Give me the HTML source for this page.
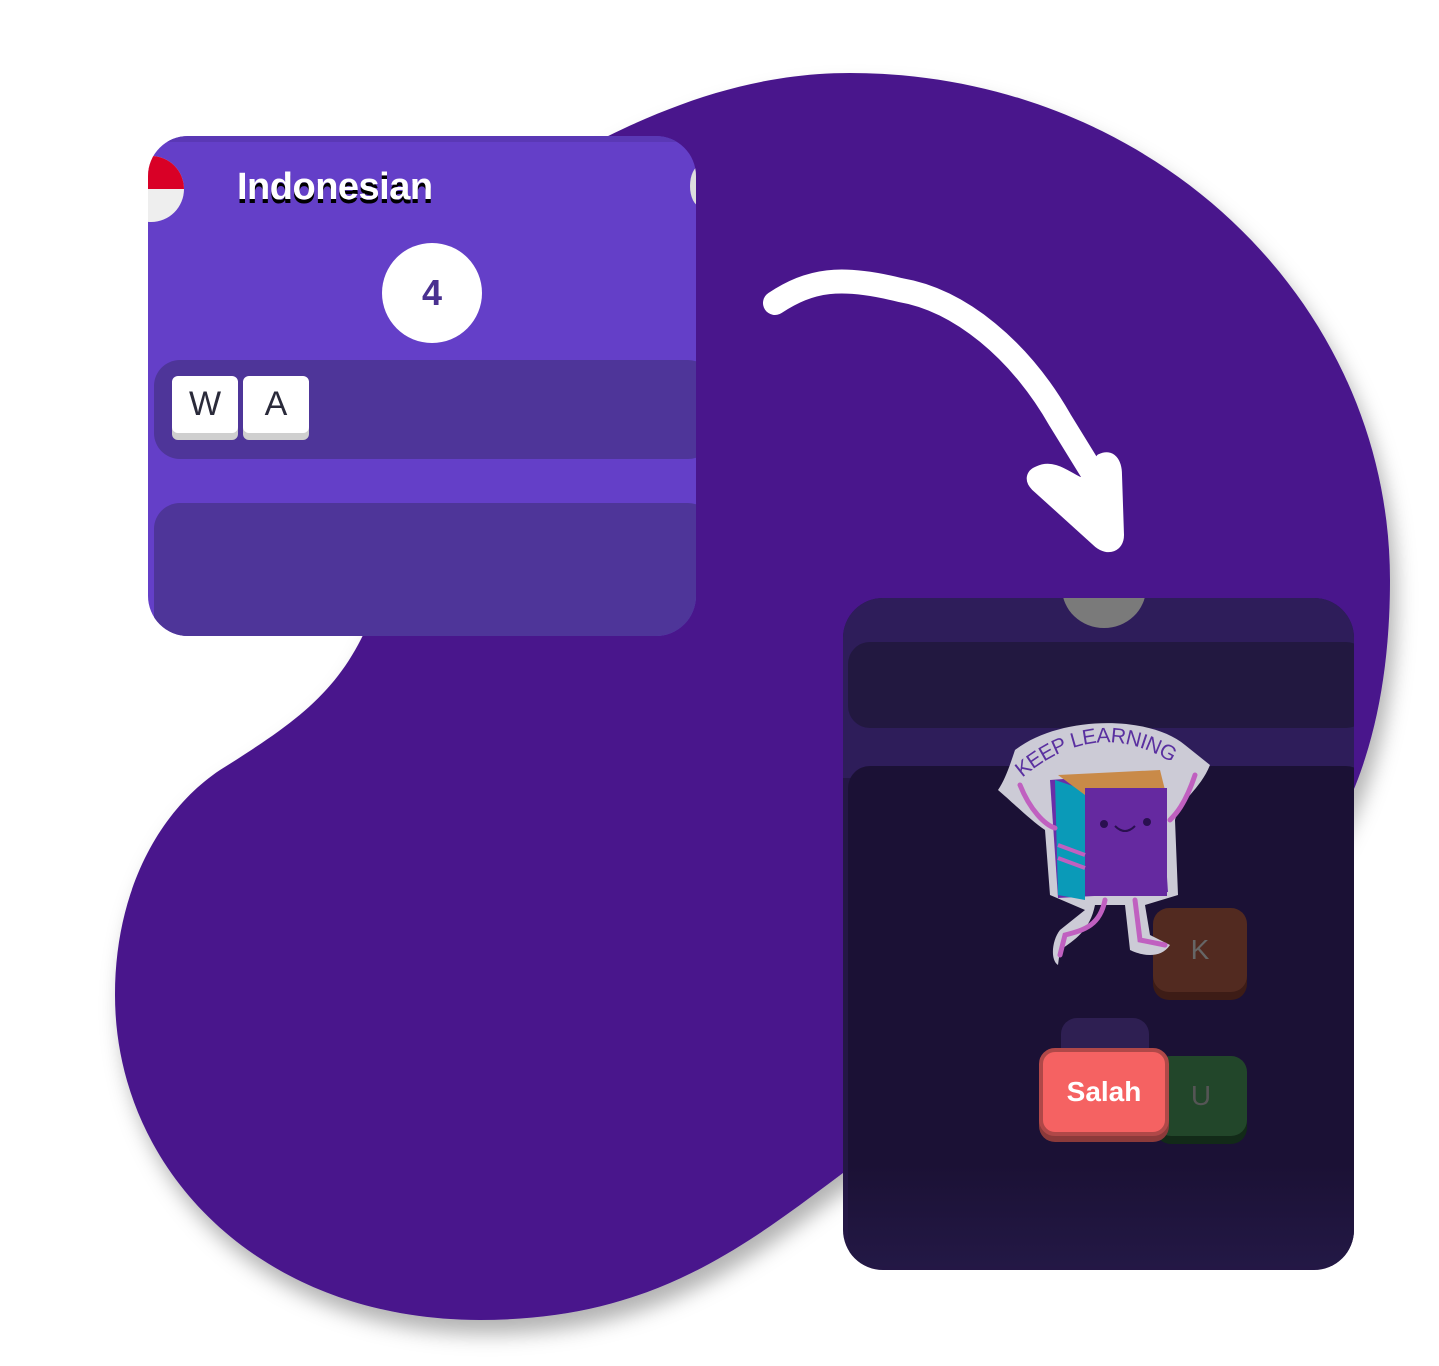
<!DOCTYPE html>
<html><head><meta charset="utf-8">
<style>
html,body{margin:0;padding:0;background:#fff;}
body{width:1439px;height:1366px;position:relative;overflow:hidden;font-family:"Liberation Sans",sans-serif;}
.abs{position:absolute;}
.key{position:absolute;background:#fff;border-radius:6px;box-shadow:0 7px 0 #cfcfcf;color:#2a2a3a;font-size:34px;text-align:center;}
</style></head><body>
<svg class="abs" style="left:0;top:0" width="1439" height="1366">
<defs><filter id="sh" x="-10%" y="-10%" width="130%" height="130%"><feDropShadow dx="6" dy="14" stdDeviation="10" flood-color="#000" flood-opacity="0.3"/></filter></defs>
<path filter="url(#sh)" fill="#48178c" d="M850 73 C1150 73 1390 300 1390 580 C1390 800 1300 950 1100 1000 C1000 1060 920 1120 843 1173 C740 1250 650 1320 480 1320 C260 1320 115 1170 115 995 C115 890 160 810 220 770 C300 720 340 690 370 620 L600 140 C680 100 760 73 850 73 Z"/>
<path d="M775 303 C810 280 840 275 900 290 C960 300 1020 350 1060 420 L1100 485" stroke="#fff" stroke-width="24" fill="none" stroke-linecap="round"/>
<path d="M1038 470 C1055 462 1070 478 1082 482 L1100 458 C1112 452 1118 462 1118 475 L1120 535 C1120 548 1108 552 1098 544 L1035 487 C1028 480 1030 473 1038 470 Z" fill="#fff" stroke="#fff" stroke-width="8" stroke-linejoin="round"/>
</svg>

<!-- left card -->
<div class="abs" style="left:148px;top:136px;width:548px;height:500px;border-radius:40px;background:#643fc8;overflow:hidden;">
  <div class="abs" style="left:0;top:0;width:548px;height:6px;background:#5a38b5"></div>
  <div class="abs" style="left:-30px;top:20px;width:66px;height:66px;border-radius:50%;overflow:hidden;background:#eee;">
    <div style="height:33px;background:#d90026"></div></div>
  <div class="abs" style="left:542px;top:30px;width:20px;height:40px;border-radius:50%;background:#ddd"></div>
  <div class="abs" style="left:89px;top:30px;color:#fff;font-size:38px;font-weight:bold;text-shadow:0 4px 0 #000;letter-spacing:-0.5px">Indonesian</div>
  <div class="abs" style="left:234px;top:107px;width:100px;height:100px;border-radius:50%;background:#fff;color:#4a3090;font-size:36px;font-weight:bold;text-align:center;line-height:100px">4</div>
  <div class="abs" style="left:6px;top:224px;width:560px;height:99px;border-radius:26px;background:#4e3599"></div>
  <div class="key" style="left:24px;top:240px;width:66px;height:57px;line-height:57px">W</div>
  <div class="key" style="left:95px;top:240px;width:66px;height:57px;line-height:57px">A</div>
  <div class="abs" style="left:6px;top:367px;width:560px;height:140px;border-radius:26px;background:#4e3599"></div>
</div>

<!-- right card -->
<div class="abs" style="left:843px;top:598px;width:511px;height:672px;border-radius:40px;background:#241745;overflow:hidden;">
  <div class="abs" style="left:0;top:0;width:511px;height:180px;background:#2e1d5a"></div>
  <div class="abs" style="left:219px;top:-50px;width:84px;height:80px;border-radius:50%;background:#7a7a7a"></div>
  <div class="abs" style="left:5px;top:44px;width:520px;height:86px;border-radius:22px;background:#221840"></div>
  <div class="abs" style="left:5px;top:168px;width:520px;height:500px;border-radius:22px;background:linear-gradient(#1b1135 80%,#231845)"></div>
  <div class="abs" style="left:310px;top:310px;width:94px;height:84px;border-radius:16px;background:#522a20;box-shadow:0 8px 0 #3d1c16;color:#666;font-size:28px;text-align:center;line-height:84px">K</div>
  <div class="abs" style="left:218px;top:420px;width:88px;height:60px;border-radius:16px;background:#2e1f52"></div>
  <div class="abs" style="left:312px;top:458px;width:92px;height:80px;border-radius:16px;background:#22462a;box-shadow:0 8px 0 #122a18;color:#555;font-size:28px;text-align:center;line-height:80px">U</div>
  <div class="abs" style="left:196px;top:450px;width:122px;height:80px;border-radius:16px;background:#f56262;border:4px solid #b04848;box-shadow:0 6px 0 #8c3a3a;color:#fff;font-size:28px;font-weight:bold;text-align:center;line-height:80px">Salah</div>
</div>

<!-- sticker -->
<svg class="abs" style="left:995px;top:720px" width="225" height="250" viewBox="995 720 225 250">
  <path d="M1015 750 C1060 715 1150 715 1185 745 L1210 765 C1200 790 1180 800 1175 820 L1178 895 L1145 905 L1150 935 L1170 945 C1160 960 1140 955 1130 950 L1125 905 L1095 905 C1090 930 1075 940 1060 950 L1058 965 C1050 960 1052 940 1060 930 L1085 910 L1050 895 L1045 830 C1030 820 1010 800 998 790 C1005 780 1010 765 1015 750 Z" fill="#cccbd6"/>
  <path d="M1050 780 L1160 772 L1168 892 L1058 898 Z" fill="#6a2ea8"/>
  <path d="M1055 780 L1085 790 L1085 900 L1058 895 Z" fill="#0a9ab8"/>
  <path d="M1058 775 L1160 770 L1165 790 L1085 795 Z" fill="#c98a48"/>
  <rect x="1085" y="788" width="82" height="108" fill="#6529a0"/>
  <circle cx="1104" cy="824" r="4" fill="#2a1050"/><circle cx="1147" cy="822" r="4" fill="#2a1050"/>
  <path d="M1115 826 Q1125 836 1135 826" stroke="#2a1050" stroke-width="2" fill="none"/>
  <path d="M1058 845 L1085 855 M1058 858 L1085 868" stroke="#c060c0" stroke-width="4"/>
  <path d="M1020 785 C1030 810 1045 825 1055 828 M1195 775 C1185 805 1175 815 1170 820 M1105 900 C1100 925 1085 930 1065 935 L1060 955 M1135 900 L1140 940 L1165 945" stroke="#c060c0" stroke-width="5" fill="none" stroke-linecap="round"/>
  <path id="arc" d="M1022 778 Q1100 712 1180 768" fill="none"/>
  <text font-family="Liberation Sans Narrow, Liberation Sans, sans-serif" font-size="21" letter-spacing="-0.5" fill="#5a30a0"><textPath href="#arc">KEEP LEARNING</textPath></text>
</svg>
</body></html>
